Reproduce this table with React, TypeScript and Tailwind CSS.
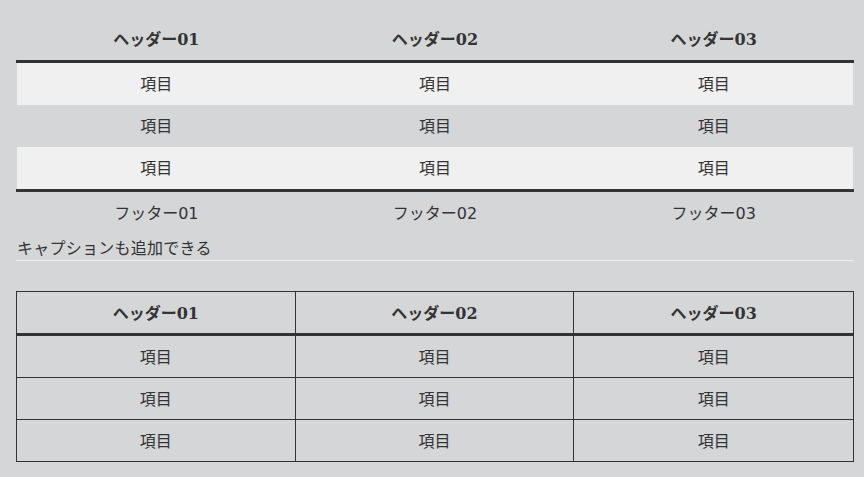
import React from "react";

const sans = { fontFamily: '"DejaVu Sans", "Noto Sans CJK JP", sans-serif' };
const serif = { fontFamily: '"DejaVu Serif", "Noto Sans CJK JP", serif' };

const headers = ["ヘッダー01", "ヘッダー02", "ヘッダー03"];
const footers = ["フッター01", "フッター02", "フッター03"];

function Row({ light }: { light?: boolean }) {
  return (
    <div className={`mx-[1px] grid grid-cols-3 h-[42px] ${light ? "bg-[#f0f0f0]" : ""}`}>
      {[0, 1, 2].map((i) => (
        <div key={i} className="flex items-center justify-center pt-[2px]">
          項目
        </div>
      ))}
    </div>
  );
}

export default function App() {
  return (
    <div
      className="min-h-[477px] w-[864px] bg-[#d5d6d8] text-[16px] text-[#333333] pt-[18px]"
      style={sans}
    >
      {/* Table 1 */}
      <div className="ml-4 w-[838px]">
        <div className="mx-[1px] grid grid-cols-3 h-[42px] font-bold" style={serif}>
          {headers.map((h) => (
            <div key={h} className="flex items-center justify-center pt-[2px]">
              {h}
            </div>
          ))}
        </div>
        <div className="h-[3px] bg-[#333333]" />
        <Row light />
        <Row />
        <Row light />
        <div className="h-[3px] bg-[#333333]" />
        <div className="mx-[1px] grid grid-cols-3 h-[42px]">
          {footers.map((f) => (
            <div key={f} className="flex items-center justify-center pt-[2px]">
              {f}
            </div>
          ))}
        </div>
        <div className="h-[27px] border-b border-[#f0f0f0] pl-[1px] pt-[4px] flex items-center leading-none tracking-[0.25px]">
          キャプションも追加できる
        </div>
      </div>

      {/* Table 2 */}
      <div className="ml-4 mt-[30px] w-[838px] border border-[#333333]">
        <div className="grid grid-cols-3 h-[41px] font-bold" style={serif}>
          {headers.map((h, i) => (
            <div
              key={h}
              className={`flex items-center justify-center pt-[2px] ${i < 2 ? "border-r border-[#333333]" : ""}`}
            >
              {h}
            </div>
          ))}
        </div>
        <div className="h-[3px] bg-[#333333]" />
        {[0, 1, 2].map((r) => (
          <div
            key={r}
            className={`grid grid-cols-3 ${r < 2 ? "h-[42px] border-b border-[#333333]" : "h-[41px]"}`}
          >
            {[0, 1, 2].map((i) => (
              <div
                key={i}
                className={`flex items-center justify-center pt-[2px] ${i < 2 ? "border-r border-[#333333]" : ""}`}
              >
                項目
              </div>
            ))}
          </div>
        ))}
      </div>
    </div>
  );
}
